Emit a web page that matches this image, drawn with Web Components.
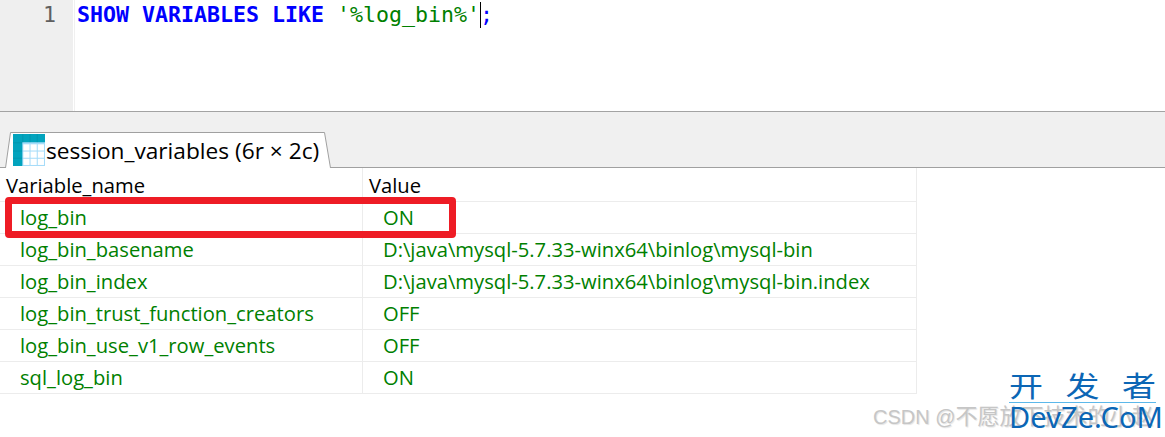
<!doctype html>
<html><head><meta charset="utf-8">
<style>html,body{margin:0;padding:0;background:#fff;width:1165px;height:437px;overflow:hidden}</style>
</head><body>
<app-window>
<sql-editor></sql-editor>
<result-tabs label="session_variables (6r × 2c)"></result-tabs>
<result-grid></result-grid>
</app-window>
<script>
function def(name,html){customElements.define(name,class extends HTMLElement{constructor(){super();this.attachShadow({mode:'open'}).innerHTML=html(this);}});}
def('app-window',()=>`<style>:host{display:block;position:relative;width:1165px;height:437px;overflow:hidden;font-family:"Open Sans","Noto Sans",sans-serif}
.box{position:absolute;left:5px;top:197px;width:437px;height:27px;border:7px solid #ee1c25;border-radius:4px}
.wm{position:absolute;left:873px;top:405px;font:20px/24px "Liberation Sans","Noto Sans CJK SC",sans-serif;color:#c6c6c6;white-space:nowrap;text-shadow:1px 1px 1px #e4e4e4}
.wm span{font-size:22px}
.logo{position:absolute;left:1009px;top:368px;width:147px;color:#0b66b5;display:flex;flex-direction:column;align-items:stretch}
.cn{font:34px/34px "Noto Sans CJK SC",sans-serif;font-weight:400;display:flex;justify-content:space-between;transform:scaleY(.85)}
.rule{height:1px;background:#5cb8ea}
.en{font:29px/27px "Noto Sans",sans-serif;letter-spacing:.1px;white-space:nowrap}
</style><slot></slot><div class="box"></div><div class="wm">CSDN @<span>不愿放下技术的小赵</span></div>
<div class="logo"><div class="cn"><span>开</span><span>发</span><span>者</span></div><div class="rule"></div><div class="en">DevZe.CoM</div></div>`);
def('sql-editor',()=>`<style>:host{display:flex;height:111px;background:#fff}
.g{width:73px;background:#efefef;border-right:1px solid #fff;box-shadow:1px 0 0 #f0f0f0;text-align:right;color:#5f5f5f;font:21.6px/30px "DejaVu Sans Mono",monospace}
.g span{display:block;padding-right:17px}
.c{margin-left:3px;font:21.6px/30px "DejaVu Sans Mono",monospace;white-space:pre}
b{color:#0000ff;font-weight:700}i{font-style:normal;color:#008000}u{text-decoration:none;color:#0000ff}
.caret{display:inline-block;width:1px;height:26px;background:#000;vertical-align:-6px;margin:0 -.5px}
</style><div class="g"><span>1</span></div><div class="c"><b>SHOW VARIABLES LIKE</b> <i>'%log_bin%'</i><span class="caret"></span><u>;</u></div>`);
def('result-tabs',el=>`<style>:host{display:block;height:57px;box-sizing:border-box;background:#f0f0f0;border-top:1px solid #a3a3a3;border-bottom:1px solid #a0a0a0;padding-left:5px;padding-top:20px}
.t{display:flex;align-items:center;gap:1px;width:326px;height:36px;box-sizing:border-box;padding:0 0 0 8px;font-size:22.7px;color:#000;white-space:nowrap;position:relative}
.o{position:absolute;left:0;top:0}
svg.i,span{position:relative;flex:none}</style>
<div class="t"><svg class="o" width="326" height="36"><path d="M.5 36 5.5.5H319.5L325.5 36" fill="#fff" stroke="#a0a0a0"/></svg><svg class="i" width="32" height="32" viewBox="0 0 31 31"><rect width="31" height="31" fill="#a6dcf9"/><rect width="31" height="8" fill="#02a3bd"/><rect width="9" height="31" fill="#02a3bd"/>
<g fill="#fff"><rect x="10" y="10" width="6" height="6"/><rect x="17" y="10" width="6" height="6"/><rect x="24" y="10" width="6" height="6"/><rect x="10" y="17" width="6" height="6"/><rect x="17" y="17" width="6" height="6"/><rect x="24" y="17" width="6" height="6"/><rect x="10" y="24" width="6" height="6"/><rect x="17" y="24" width="6" height="6"/><rect x="24" y="24" width="6" height="6"/></g>
<g fill="#007f96" opacity=".3"><rect x="9" width="1" height="8"/><rect x="16" width="1" height="8"/><rect x="23" width="1" height="8"/><rect y="8" width="9" height="1"/><rect y="16" width="9" height="1"/><rect y="23" width="9" height="1"/></g></svg><span>${el.getAttribute('label')}</span></div>`);
const rows=[['log_bin','ON'],['log_bin_basename','D:\\java\\mysql-5.7.33-winx64\\binlog\\mysql-bin'],['log_bin_index','D:\\java\\mysql-5.7.33-winx64\\binlog\\mysql-bin.index'],['log_bin_trust_function_creators','OFF'],['log_bin_use_v1_row_events','OFF'],['sql_log_bin','ON']];
def('result-grid',()=>`<style>:host{display:grid;grid-template-columns:363px 554px;width:917px;font-size:20.2px;line-height:31px;color:#008000}
.c{height:32px;box-sizing:border-box;border-bottom:1px solid #ececec;border-right:1px solid #ececec;white-space:nowrap;padding-left:20px}
.h{color:#000;padding-left:6px;height:34px;padding-top:2px}</style>
<div class="c h">Variable_name</div><div class="c h">Value</div>${rows.map(r=>`<div class="c">${r[0]}</div><div class="c">${r[1]}</div>`).join('')}`);
</script></body></html>
